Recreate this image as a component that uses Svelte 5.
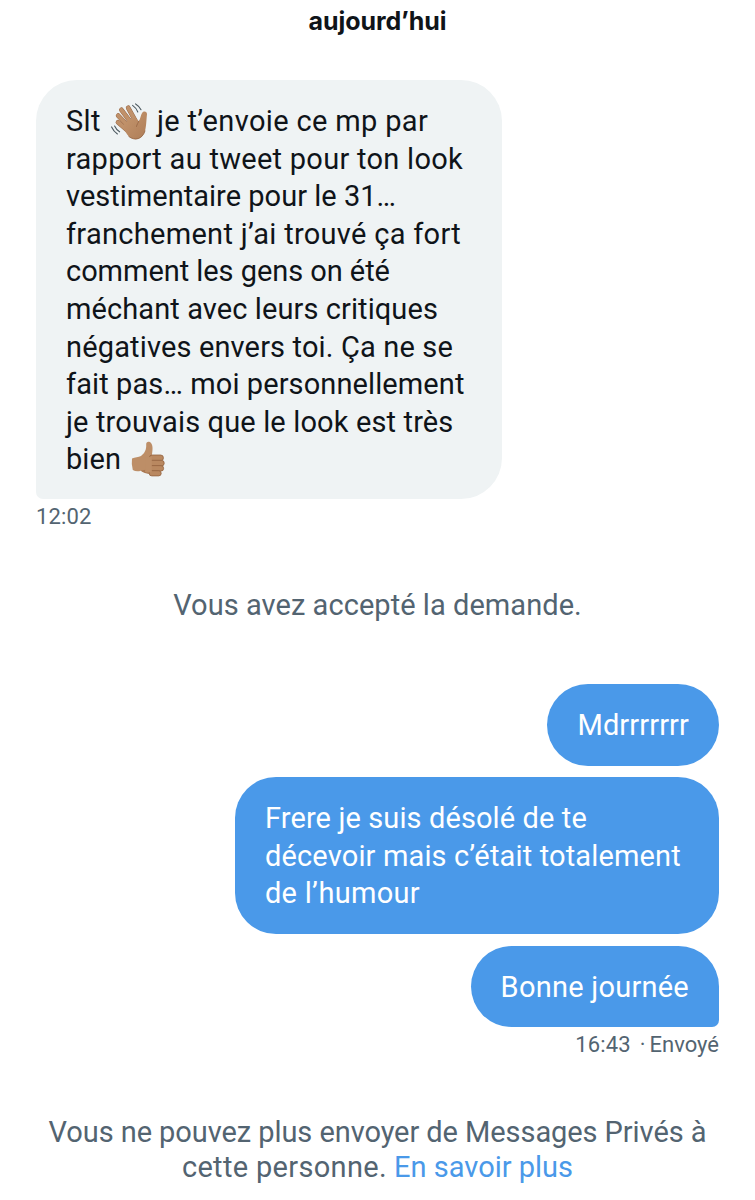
<script>
  const received = [
    { text: 'Slt', emoji: 'wave', after: 'je t’envoie ce mp par', spacing: 0.35 },
    { text: 'rapport au tweet pour ton look', spacing: 0.28 },
    { text: 'vestimentaire pour le 31…', spacing: 0.02 },
    { text: 'franchement j’ai trouvé ça fort', spacing: 0.29 },
    { text: 'comment les gens on été', spacing: -0.05 },
    { text: 'méchant avec leurs critiques', spacing: 0.09 },
    { text: 'négatives envers toi. Ça ne se', spacing: 0.15 },
    { text: 'fait pas… moi personnellement', spacing: 0.1 },
    { text: 'je trouvais que le look est très', spacing: 0.14 },
    { text: 'bien', emoji: 'thumb', spacing: 0.07 }
  ]

  const sent = [
    [{ text: 'Mdrrrrrrr', spacing: 0.12 }],
    [
      { text: 'Frere je suis désolé de te', spacing: 0.11 },
      { text: 'décevoir mais c’était totalement', spacing: 0.15 },
      { text: 'de l’humour', spacing: 0.27 }
    ],
    [{ text: 'Bonne journée', spacing: 0.24 }]
  ]
</script>

{#snippet wave()}
  <svg class="wave" viewBox="0 0 38 38" role="img" aria-label="Salut">
    <defs>
      <linearGradient id="skin" x1="0" y1="0" x2="1" y2="1">
        <stop offset="0" stop-color="#c6976f" />
        <stop offset="1" stop-color="#ae7d57" />
      </linearGradient>
    </defs>
    <g fill="none" stroke="#946442" stroke-width="4.7" stroke-linecap="round">
      <path d="M8 19.2 17 27" />
      <path d="M8.2 12.6 19 24" />
      <path d="M11.4 6.8 22 21" />
      <path d="M18.2 4.8 26 19" />
    </g>
    <g fill="none" stroke="#c0916a" stroke-width="3.8" stroke-linecap="round">
      <path d="M8 19.2 17 27" />
      <path d="M8.2 12.6 19 24" />
      <path d="M11.4 6.8 22 21" />
      <path d="M18.2 4.8 26 19" />
    </g>
    <path d="M13.3 23.3 15.4 19.6 19.4 16.8 25 14.2 28.7 18.2C30.6 16 30.5 12.3 32.2 9.8 33.8 7.4 37.3 8.5 37 11.3 36.4 15.6 36.5 23 35 28 32.4 36.6 24.8 38.4 18.9 33.6 16.5 31.3 14.7 27.6 13.3 23.3Z" fill="url(#skin)" />
    <path d="M26.5 23.5C26.7 21.3 28.6 19.7 28.7 18.2M18.9 33.6C24.8 38.2 32.4 36.4 35 28" fill="none" stroke="#946442" stroke-width=".8" stroke-linecap="round" />
    <path d="M25.6 .9Q29.2 3 31 6.8M22.6 2.4Q26.3 5 27.8 9M1.6 23.9Q3.6 28.3 7.4 31M4.6 23Q6.2 26.6 9.6 28.8" fill="none" stroke="#4c5960" stroke-width="1.1" stroke-linecap="round" />
  </svg>
{/snippet}

{#snippet thumb()}
  <svg class="thumb" viewBox="0 0 34 36" role="img" aria-label="Pouce levé">
    <path d="M1 17.5C4 16 7.4 16.6 10 15 13.7 12 15.5 8.8 15.2 3.5 15 .3 18.4 0 20.2 2.2 22.3 5.2 21.5 9.6 20.8 15.2L20.5 31.5Q14 32.8 9.8 29.8 5.4 31.2 1.8 29 .2 23.5 1 17.5Z" fill="#bd8e67" />
    <path d="M9.8 29.8Q13 32.8 20 33L21 27Q14 29 9.8 29.8Z" fill="#a97852" />
    <g fill="#b98860" stroke="#93623f" stroke-width=".8">
      <rect x="18.4" y="14" width="14" height="5.8" rx="2.8" />
      <rect x="18" y="19.3" width="15.2" height="5.7" rx="2.8" />
      <rect x="18" y="24.6" width="14.6" height="5.5" rx="2.7" />
      <rect x="18.2" y="29.7" width="12" height="5.2" rx="2.6" />
    </g>
    <path d="M15 16.3Q19 16.5 20.8 15.2V31Q17 32.2 14 31Z" fill="#bd8e67" />
  </svg>
{/snippet}

{#snippet lines(list)}
  {#each list as line}
    <span class="line" style="letter-spacing: {line.spacing}px">
      {line.text}
      {#if line.emoji === 'wave'}
        {@render wave()}
      {:else if line.emoji === 'thumb'}
        {@render thumb()}
      {/if}
      {line.after ?? ''}
    </span>
  {/each}
{/snippet}

<main>
  <h2>aujourd’hui</h2>

  <div class="bubble in">{@render lines(received)}</div>
  <time>12:02</time>

  <p class="notice">Vous avez accepté la demande.</p>

  <div class="sent">
    {#each sent as message}
      <div class="bubble out" class:long={message.length > 1}>{@render lines(message)}</div>
    {/each}
  </div>
  <div class="status"><span>16:43</span><span>·</span><span>Envoyé</span></div>

  <p class="closed">
    <span class="first">Vous ne pouvez plus envoyer de Messages Privés à</span><br>
    <span class="second">cette personne.</span> <a href="#plus">En savoir plus</a>
  </p>
</main>

<style>
  :global(body) {
    background: #fff;
  }

  main {
    box-sizing: border-box;
    height: 1200px;
    overflow: hidden;
    padding: 0 36px;
    display: flex;
    flex-direction: column;
    font-family: Roboto, "Liberation Sans", sans-serif;
    font-size: 29px;
    color: #0f1419;
  }

  h2 {
    margin: 5px 0 43px;
    font: 700 25px/32px Inter, sans-serif;
    letter-spacing: -.07px;
    text-align: center;
  }

  .bubble {
    box-sizing: border-box;
    padding: 23px 30px 21px;
    border-radius: 41px;
    line-height: 37.6px;
  }

  .in {
    width: 466px;
    height: 419px;
    background: #eff3f4;
    border-bottom-left-radius: 7px;
    align-self: flex-start;
  }

  .line {
    display: block;
    height: 37.6px;
    white-space: nowrap;
  }

  svg {
    display: inline-block;
    overflow: visible;
  }

  .wave {
    width: 38px;
    height: 38px;
    margin: -8px 1px -8px 2px;
    vertical-align: -1.5px;
  }

  .thumb {
    width: 34px;
    height: 36px;
    margin: -8px 0 -8px 3px;
    vertical-align: 0;
  }

  time,
  .status {
    font-size: 22px;
    line-height: 26px;
    color: #536471;
  }

  time {
    margin-top: 5px;
    letter-spacing: .15px;
  }

  .notice {
    margin: 57px 0 61px;
    line-height: 36px;
    text-align: center;
    color: #536471;
    letter-spacing: .05px;
  }

  .sent {
    display: flex;
    flex-direction: column;
    align-items: flex-end;
    gap: 11.3px;
  }

  .out {
    padding: 23px 30px 21.3px;
    background: #4a99e9;
    color: #fff;
  }

  .long {
    width: 484px;
  }

  .out:last-child {
    border-bottom-right-radius: 7px;
  }

  .status {
    margin-top: 5px;
    display: flex;
    justify-content: flex-end;
    gap: 4px;
  }

  .status span:first-child {
    margin-right: 5px;
    letter-spacing: .15px;
  }

  .closed {
    margin: 57px -10px 0;
    line-height: 35px;
    text-align: center;
    color: #536471;
  }

  .first {
    letter-spacing: -.07px;
  }

  .second {
    letter-spacing: .32px;
  }

  a {
    color: #4a99e9;
    text-decoration: none;
  }
</style>
